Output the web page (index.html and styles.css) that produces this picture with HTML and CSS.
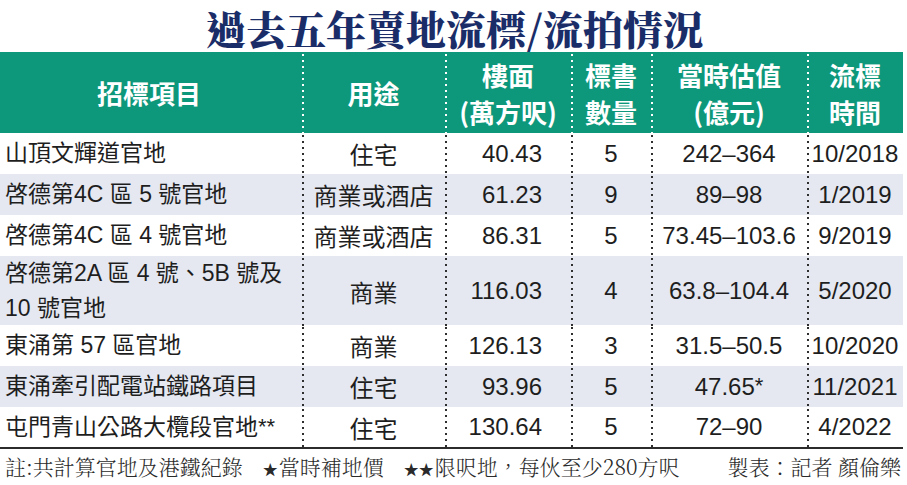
FILE: index.html
```html
<!DOCTYPE html>
<html lang="zh-Hant">
<head>
<meta charset="utf-8">
<title>過去五年賣地流標/流拍情況</title>
<link rel="stylesheet" href="styles.css">
</head>
<body>
<div class="page">
  <div class="title-bar"><h1 class="title">過去五年賣地流標/流拍情況</h1></div>
  <div class="table">
    <div class="row head">
      <div class="c first-h">招標項目</div>
      <div class="c">用途</div>
      <div class="c">樓面<br>(萬方呎)</div>
      <div class="c">標書<br>數量</div>
      <div class="c">當時估值<br>(億元)</div>
      <div class="c">流標<br>時間</div>
    </div>
    <div class="row">
      <div class="c name">山頂文輝道官地</div>
      <div class="c">住宅</div>
      <div class="c num">40.43</div>
      <div class="c">5</div>
      <div class="c">242–364</div>
      <div class="c">10/2018</div>
    </div>
    <div class="row alt">
      <div class="c name">啓德第4C 區 5 號官地</div>
      <div class="c">商業或酒店</div>
      <div class="c num">61.23</div>
      <div class="c">9</div>
      <div class="c">89–98</div>
      <div class="c">1/2019</div>
    </div>
    <div class="row">
      <div class="c name">啓德第4C 區 4 號官地</div>
      <div class="c">商業或酒店</div>
      <div class="c num">86.31</div>
      <div class="c">5</div>
      <div class="c">73.45–103.6</div>
      <div class="c">9/2019</div>
    </div>
    <div class="row alt tall">
      <div class="c name">啓德第2A 區 4 號、5B 號及<br>10 號官地</div>
      <div class="c">商業</div>
      <div class="c num">116.03</div>
      <div class="c">4</div>
      <div class="c">63.8–104.4</div>
      <div class="c">5/2020</div>
    </div>
    <div class="row">
      <div class="c name">東涌第 57 區官地</div>
      <div class="c">商業</div>
      <div class="c num">126.13</div>
      <div class="c">3</div>
      <div class="c">31.5–50.5</div>
      <div class="c">10/2020</div>
    </div>
    <div class="row alt">
      <div class="c name">東涌牽引配電站鐵路項目</div>
      <div class="c">住宅</div>
      <div class="c num">93.96</div>
      <div class="c">5</div>
      <div class="c">47.65<span class="star">*</span></div>
      <div class="c">11/2021</div>
    </div>
    <div class="row last">
      <div class="c name">屯門青山公路大欖段官地<span class="star">**</span></div>
      <div class="c">住宅</div>
      <div class="c num">130.64</div>
      <div class="c">5</div>
      <div class="c">72–90</div>
      <div class="c">4/2022</div>
    </div>
  </div>
  <div class="foot">
    <span class="note">註:共計算官地及港鐵紀錄</span>
    <span class="note"><span class="bstar">★</span>當時補地價</span>
    <span class="note"><span class="bstar">★★</span>限呎地，每伙至少280方呎</span>
    <span class="credit">製表：記者 顏倫樂</span>
  </div>
</div>
</body>
</html>
```

FILE: styles.css
```css
html, body {
  margin: 0;
  padding: 0;
  background: #ffffff;
}

.page {
  width: 907px;
  height: 485px;
  overflow: hidden;
}

.title-bar {
  height: 52px;
  display: flex;
  justify-content: center;
  align-items: center;
  padding-left: 2px;
}

.title {
  margin: 2px 0 0 0;
  line-height: normal;
  font-family: "Noto Serif CJK TC", "Noto Sans CJK TC", serif;
  font-weight: 900;
  font-size: 40px;
  color: #1b2d68;
}

.table {
  width: 903px;
  border-bottom: 2px solid #2b2b2b;
}

.row {
  display: grid;
  grid-template-columns: 302px 143px 126px 80px 156px 96px;
  height: 41px;
  font-family: "Liberation Sans", "Noto Sans CJK TC", sans-serif;
  font-size: 23px;
  color: #1e1e1e;
}

.row.alt {
  background: #e5e8f1;
}

.row.tall {
  height: 69px;
}

.row.last {
  height: 40px;
}

.row.head {
  height: 81px;
  background: #0e987b;
  color: #ffffff;
  font-family: "Noto Sans CJK TC", sans-serif;
  font-weight: 700;
  font-size: 26px;
  line-height: 37px;
}

.c {
  display: flex;
  align-items: center;
  justify-content: center;
  text-align: center;
  white-space: nowrap;
  background-image: linear-gradient(to bottom, #2e2e2e 0, #2e2e2e 2px, transparent 2px);
  background-size: 2px 6px;
  background-repeat: repeat-y;
  background-position: 0 2px;
}

.c:first-child {
  background-image: none;
}

.head .c {
  background-image: linear-gradient(to bottom, #ffffff 0, #ffffff 2px, transparent 2px);
}

.head .c:first-child {
  background-image: none;
}

.c.first-h {
  justify-content: center;
  padding-right: 4px;
}

.c.name {
  justify-content: flex-start;
  text-align: left;
  padding-left: 5px;
  line-height: 35px;
}

.c.num {
  justify-content: flex-end;
  padding-right: 29px;
}

.row:not(.head) .c {
  font-size: 24px;
}

.row:not(.head) .c.name {
  font-size: 23px;
}

.star {
  font-family: "Liberation Sans", sans-serif;
  font-size: 22px;
  align-self: center;
  position: relative;
  top: -1px;
}

.foot {
  display: flex;
  align-items: center;
  height: 33px;
  padding: 0 6px 0 5px;
  font-family: "Noto Serif CJK TC", "Noto Sans CJK TC", serif;
  font-weight: 300;
  font-size: 21px;
  color: #2a2a2a;
  white-space: nowrap;
}

.bstar {
  font-size: 15px;
  margin-right: 1px;
}

.note {
  margin-right: 20px;
}

.credit {
  margin-left: auto;
}
```
